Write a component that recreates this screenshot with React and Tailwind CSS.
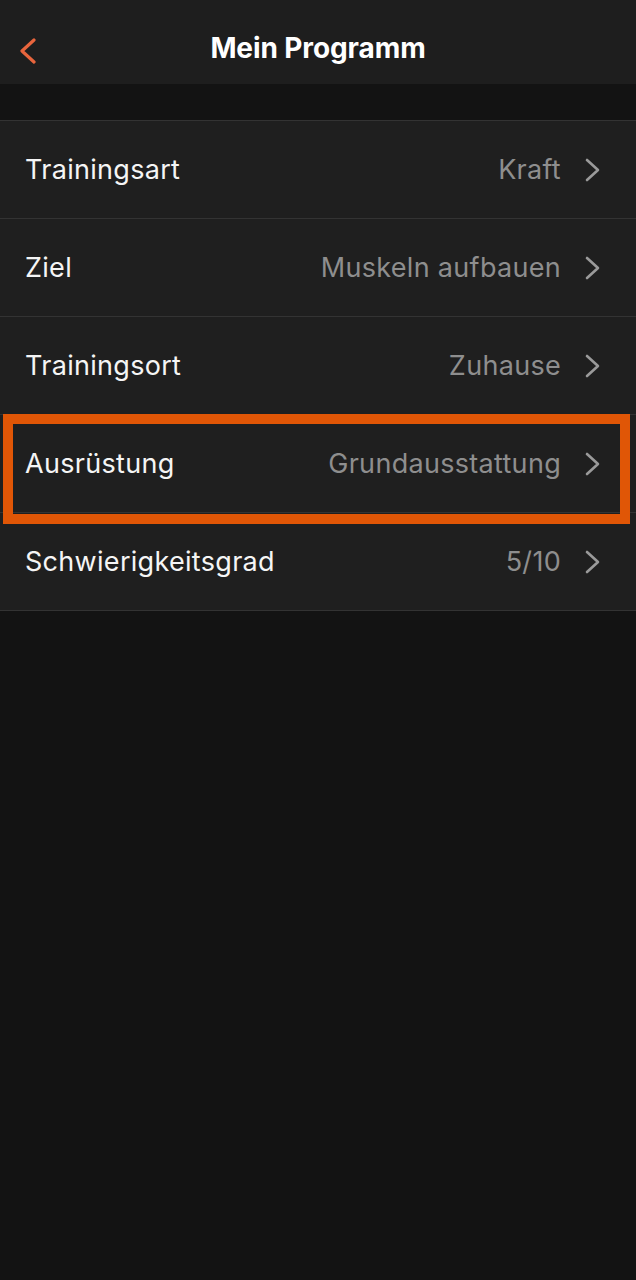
import React from 'react';

const rows = [
  { label: 'Trainingsart', value: 'Kraft' },
  { label: 'Ziel', value: 'Muskeln aufbauen' },
  { label: 'Trainingsort', value: 'Zuhause' },
  { label: 'Ausrüstung', value: 'Grundausstattung', marked: true },
  { label: 'Schwierigkeitsgrad', value: '5/10' },
];

function Chevron({ className, color = '#9a9a9a', width = 2.6 }) {
  return (
    <svg className={className} viewBox="0 0 15 24" fill="none">
      <path d="M2 2l11 10L2 22" stroke={color} strokeWidth={width} strokeLinecap="round" strokeLinejoin="round" />
    </svg>
  );
}

export default function App() {
  return (
    <div className="min-h-[1280px] bg-[#131313] text-white" style={{ fontFamily: 'Inter, "Noto Sans", sans-serif' }}>
      <header className="relative h-[84px] bg-[#1e1e1e] flex items-center justify-center">
        <button className="absolute left-[19px] top-[38px]">
          <svg className="w-[17px] h-[26px]" viewBox="0 0 17 26" fill="none">
            <path d="M15 2L3 13l12 11" stroke="#e8653d" strokeWidth="3.2" strokeLinecap="round" strokeLinejoin="round" />
          </svg>
        </button>
        <h1 className="text-[28px] font-bold tracking-[-0.1px] pt-[12px]">Mein Programm</h1>
      </header>

      <div className="h-[36px]" />

      <div className="border-t border-[#333333]">
        {rows.map(r => (
          <div key={r.label} className="relative h-[98px] bg-[#1f1f1f] border-b border-[#333333] flex items-center pl-[25px] pr-[36px]">
            <span className="text-[27px] tracking-[0.3px] text-[#f5f5f5] flex-1 pt-[2px]">{r.label}</span>
            <span className="text-[27px] tracking-[0.3px] text-[#8e8e8e] mr-[24px] pt-[2px]">{r.value}</span>
            <Chevron className="w-[15px] h-[24px]" />
            {r.marked && (
              <div className="absolute left-[3px] right-[6px] top-[-1px] h-[110px] border-[10px] border-[#e05606] z-10" />
            )}
          </div>
        ))}
      </div>
    </div>
  );
}
